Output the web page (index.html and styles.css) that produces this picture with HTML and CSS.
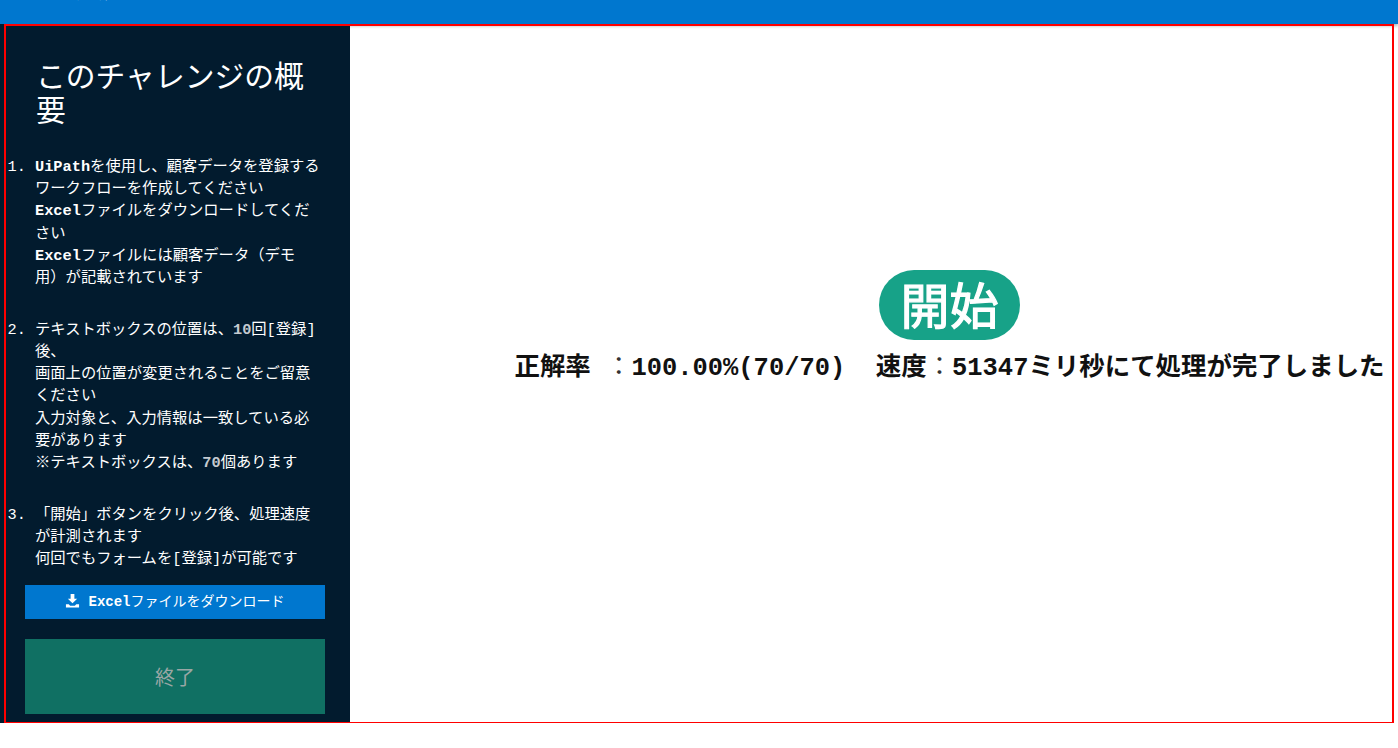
FILE: index.html
```html
<!DOCTYPE html>
<html lang="ja">
<head>
    <meta charset="UTF-8">
    <title>RPAチャレンジ</title>
    <link rel="stylesheet" href="styles.css">
</head>
<body>
<header class="topbar">
    <div class="topbar-title">入力フォーム</div>
</header>
<div class="wrap">
    <aside class="side">
        <h1 class="side-title">このチャレンジの概要</h1>
        <ol class="steps">
            <li>
                <b>UiPath</b>を使用し、顧客データを登録するワークフローを作成してください<br>
                <b>Excel</b>ファイルをダウンロードしてください<br>
                <b>Excel</b>ファイルには顧客データ（デモ用）が記載されています
            </li>
            <li>
                テキストボックスの位置は、<b class="num">10</b>回[登録]後、<br>
                画面上の位置が変更されることをご留意ください<br>
                入力対象と、入力情報は一致している必要があります<br>
                ※テキストボックスは、<b class="num">70</b>個あります
            </li>
            <li>
                「開始」ボタンをクリック後、処理速度が計測されます<br>
                何回でもフォームを[登録]が可能です
            </li>
        </ol>
        <a href="javascript:;" class="btn-download">
            <svg class="icon-download" viewBox="0 0 16 16"><path fill="#fff" d="M6 1h4v5h3l-5 5-5-5h3zM1 12h3l1.500 1.500h5L12 12h3v3.500H1z"/></svg>
            <span><b>Excel</b>ファイルをダウンロード</span>
        </a>
        <a href="javascript:;" class="btn-end">終了</a>
    </aside>
    <main class="content">
        <a href="javascript:;" class="btn-start">開始</a>
        <p class="result">正解率 <span class="colon">：</span>100.00%(70/70)  速度<span class="colon">：</span>51347ミリ秒にて処理が完了しました</p>
    </main>
    <div class="outline"></div>
</div>
</body>
</html>
```

FILE: styles.css
```css
*{margin:0;padding:0;box-sizing:border-box;}
html,body{height:748px;overflow:hidden;background:#fff;}
body{
    font-family:"Liberation Mono","Noto Sans CJK JP",monospace;
    text-spacing-trim:space-all;
}
a{text-decoration:none;}
.topbar{
    height:24px;
    background:#0077cf;
    overflow:hidden;
    box-shadow:0 2px 3px rgba(0,0,0,.3);
}
.topbar-title{
    margin:-24px 0 0 75px;
    color:#fff;
    font-size:28px;
    line-height:30px;
}
.wrap{
    position:relative;
    display:flex;
    height:699px;
}
.outline{
    position:absolute;
    left:4px;
    right:4px;
    top:0;
    bottom:0;
    border:solid #f00;
    border-width:2px 2px 1px 2px;
    pointer-events:none;
}
.side{
    width:350px;
    background:#021b2e;
    color:#fff;
    flex:none;
}
.side-title{
    margin:38px 0 0 36px;
    width:290px;
    font-size:29.8px;
    font-weight:400;
    line-height:34px;
}
.steps{
    margin-top:26px;
    padding-left:35px;
    width:323px;
    font-size:15.3px;
    line-height:22.2px;
}
.steps li{margin-bottom:29.5px;}
.steps li:last-child{margin-bottom:0;}
.num{color:#c4cad0;}
.btn-download{
    display:flex;
    align-items:center;
    justify-content:center;
    gap:8px;
    width:300px;
    height:34px;
    margin:15px 0 0 25px;
    padding-bottom:4px;
    background:#0077cf;
    color:#fff;
    font-size:14px;
}
.icon-download{width:15px;height:15px;}
.btn-end{
    display:flex;
    align-items:center;
    justify-content:center;
    width:300px;
    height:75px;
    margin:20px 0 0 25px;
    background:#107063;
    color:#9aa7a5;
    font-size:20px;
}
.content{
    flex:1;
    display:flex;
    flex-direction:column;
    align-items:center;
    padding:246px 6px 0 157px;
}
.btn-start{
    width:141px;
    height:70px;
    border-radius:35px;
    background:#17a288;
    color:#fff;
    font-family:"Noto Sans CJK JP",sans-serif;
    font-size:49px;
    -webkit-text-stroke:1.2px #fff;
    line-height:66px;
    text-align:center;
}
.result{
    margin-top:12px;
    color:#111;
    font-size:25.45px;
    font-weight:700;
    line-height:34px;
    white-space:pre;
}
.colon{font-weight:400;color:#333;}
```
